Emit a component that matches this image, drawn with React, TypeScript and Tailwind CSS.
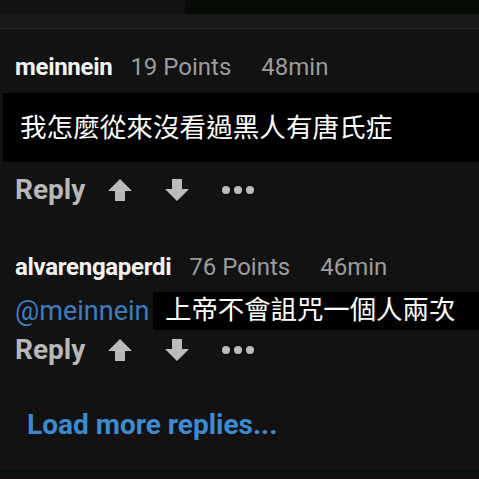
const font = { fontFamily: 'Roboto, "Noto Sans CJK TC", sans-serif' };

function ArrowUp() {
  return (
    <svg width="26" height="24" viewBox="0 0 26 24">
      <path d="M13 1 L25 13 L18 13 L18 23 L8 23 L8 13 L1 13 Z" fill="#bcbcbc" />
    </svg>
  );
}

function ArrowDown() {
  return (
    <svg width="26" height="24" viewBox="0 0 26 24">
      <path d="M13 23 L25 11 L18 11 L18 1 L8 1 L8 11 L1 11 Z" fill="#bcbcbc" />
    </svg>
  );
}

function Dots() {
  return (
    <svg width="34" height="10" viewBox="0 0 34 10">
      <circle cx="5" cy="5" r="4" fill="#bcbcbc" />
      <circle cx="17" cy="5" r="4" fill="#bcbcbc" />
      <circle cx="29" cy="5" r="4" fill="#bcbcbc" />
    </svg>
  );
}

function Actions() {
  return (
    <div className="flex items-center h-[40px] pl-[15px]">
      <span className="text-[28px] font-bold text-[#b8b8b8]">Reply</span>
      <div className="ml-[22px]"><ArrowUp /></div>
      <div className="ml-[31px]"><ArrowDown /></div>
      <div className="ml-[31px]"><Dots /></div>
    </div>
  );
}

function Header({ name, points, time }: { name: string; points: string; time: string }) {
  return (
    <div className="flex items-center h-[30px] pl-[15px] text-[24px]">
      <span className="font-bold text-[#f2f2f2] tracking-[-0.3px]">{name}</span>
      <span className="ml-[18px] text-[#9c9c9c]">{points}</span>
      <span className="ml-[30px] text-[#9c9c9c]">{time}</span>
    </div>
  );
}

export default function App() {
  return (
    <div className="w-[479px] h-[479px] bg-[#121212] overflow-hidden flex flex-col" style={font}>
      <div className="h-[14px] flex">
        <div className="w-[185px] bg-[#121212]" />
        <div className="flex-1 bg-[#060b05]" />
      </div>
      <div className="h-[15px] bg-[#17181a] border-b border-[#2a2c2c]" />
      <div className="h-[23px]" />
      <Header name="meinnein" points="19 Points" time="48min" />
      <div className="h-[11px]" />
      <div className="ml-[3px] h-[69px] bg-black flex items-center pl-[17px]">
        <span className="text-[26.6px] text-white">我怎麼從來沒看過黑人有唐氏症</span>
      </div>
      <div className="h-[8px]" />
      <Actions />
      <div className="h-[42px]" />
      <Header name="alvarengaperdi" points="76 Points" time="46min" />
      <div className="h-[10px]" />
      <div className="flex items-center h-[38px]">
        <span className="pl-[15px] w-[153px] text-[27px] text-[#3e7cc0] whitespace-nowrap">@meinnein</span>
        <div className="flex-1 h-full bg-black flex items-center pl-[12px]">
          <span className="text-[26.4px] text-white">上帝不會詛咒一個人兩次</span>
        </div>
      </div>
      <Actions />
      <div className="h-[40px]" />
      <div className="h-[30px] flex items-center pl-[27px]">
        <span className="text-[28px] font-bold text-[#3d8ad0]">Load more replies...</span>
      </div>
      <div className="flex-1" />
      <div className="h-[9px] bg-[#0f1111] border-t-2 border-[#061008]" />
    </div>
  );
}
